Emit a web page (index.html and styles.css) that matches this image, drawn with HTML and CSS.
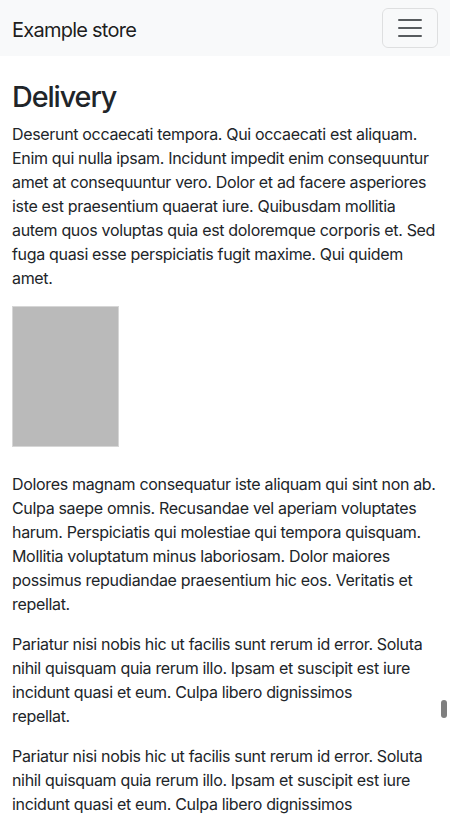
FILE: index.html
```html
<!DOCTYPE html>
<html lang="en">
<head>
<meta charset="utf-8">
<meta name="viewport" content="width=device-width, initial-scale=1">
<title>Example store</title>
<link rel="stylesheet" href="styles.css">
</head>
<body>
<nav class="navbar">
  <a class="brand" href="#">Example store</a>
  <button class="toggler" type="button" aria-label="Toggle navigation">
    <svg width="30" height="30" viewBox="0 0 30 30" aria-hidden="true"><path d="M4 7h22M4 15h22M4 23h22" stroke="rgba(33,37,41,0.75)" stroke-width="2" stroke-linecap="round" fill="none"/></svg>
  </button>
</nav>
<main class="container">
  <h1 class="title">Delivery</h1>
  <p>Deserunt occaecati tempora. Qui occaecati est aliquam. Enim qui nulla ipsam. Incidunt impedit enim consequuntur amet at consequuntur vero. Dolor et ad facere asperiores iste est praesentium quaerat iure. Quibusdam mollitia autem quos voluptas quia est doloremque corporis et. Sed fuga quasi esse perspiciatis fugit maxime. Qui quidem amet.</p>
  <div class="photo"></div>
  <p>Dolores magnam consequatur iste aliquam qui sint non ab. Culpa saepe omnis. Recusandae vel aperiam voluptates harum. Perspiciatis qui molestiae qui tempora quisquam. Mollitia voluptatum minus laboriosam. Dolor maiores possimus repudiandae praesentium hic eos. Veritatis et repellat.</p>
  <p>Pariatur nisi nobis hic ut facilis sunt rerum id error. Soluta nihil quisquam quia rerum illo. Ipsam et suscipit est iure incidunt quasi et eum. Culpa libero dignissimos<br>repellat.</p>
  <p>Pariatur nisi nobis hic ut facilis sunt rerum id error. Soluta nihil quisquam quia rerum illo. Ipsam et suscipit est iure incidunt quasi et eum. Culpa libero dignissimos<br>repellat.</p>
</main>
<div class="scroll-thumb"></div>
</body>
</html>
```
FILE: styles.css
```css
* { box-sizing: border-box; }
html, body { margin: 0; padding: 0; }
body {
  font-family: Inter, "Noto Sans", "Liberation Sans", sans-serif;
  font-size: 16px;
  line-height: 24px;
  letter-spacing: -0.33px;
  color: #212529;
  background: #fff;
}
.navbar {
  height: 56px;
  background: #f8f9fa;
  display: flex;
  align-items: center;
  justify-content: space-between;
  padding: 0 12px;
}
.brand {
  padding-top: 3px;
  font-size: 20px;
  line-height: 30px;
  letter-spacing: -0.75px;
  color: rgba(0,0,0,0.9);
  text-decoration: none;
}
.toggler {
  width: 56px;
  height: 40px;
  display: flex;
  align-items: center;
  justify-content: center;
  padding: 0;
  background: transparent;
  border: 1px solid rgba(0,0,0,0.1);
  border-radius: 6px;
}
.toggler svg { display: block; }
.container { padding: 24px 12px 0; }
.title {
  margin: 0 0 8px;
  font-size: 28.75px;
  line-height: 33.5px;
  font-weight: 500;
  letter-spacing: -1.1px;
}
p { margin: 0 0 16px; }
.photo {
  width: 107px;
  height: 141px;
  background: #bababa;
  border: 1px solid #d6d6d6;
  margin-bottom: 25px;
}
.scroll-thumb {
  position: fixed;
  right: 3px;
  top: 700px;
  width: 6px;
  height: 18px;
  border-radius: 3px;
  background: #7f7f7f;
}
```
